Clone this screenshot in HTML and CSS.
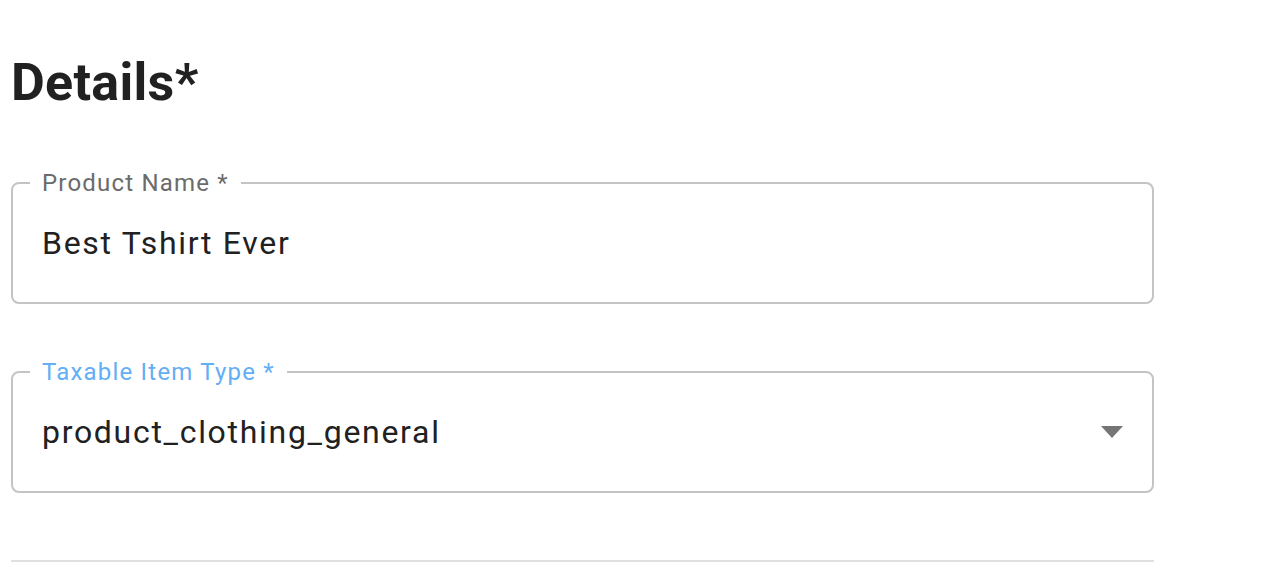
FILE: index.html
```html
<!DOCTYPE html>
<html lang="en">
<head>
  <meta charset="UTF-8">
  <title>Details</title>
  <link rel="stylesheet" href="styles.css">
</head>
<body>
  <div class="page">
    <!-- Heading -->
    <h1 class="title">Details*</h1>

    <!-- Product name -->
    <div class="field">
      <span class="field-label">Product Name *</span>
      <div class="field-value">Best Tshirt Ever</div>
    </div>

    <!-- Taxable item type (select) -->
    <div class="field field-select">
      <span class="field-label focused">Taxable Item Type *</span>
      <div class="field-value">product_clothing_general</div>
      <svg class="arrow" width="22" height="12" viewBox="0 0 22 12">
        <path d="M0 0 L22 0 L11 12 Z" fill="#757575"/>
      </svg>
    </div>

    <hr class="divider">
  </div>
</body>
</html>
```

FILE: styles.css
```css
body {
  margin: 0;
  background: #fff;
  font-family: Roboto, "Liberation Sans", Arial, sans-serif;
  color: #212121;
}

.page {
  width: 1143px;
  padding: 57px 0 0 11px;
}

.title {
  font-size: 52px;
  line-height: 52px;
  font-weight: 700;
  margin: 0 0 73px 0;
  letter-spacing: 0.3px;
}

.field {
  position: relative;
  display: flex;
  align-items: center;
  height: 118px;
  border: 2px solid #c4c4c4;
  border-radius: 8px;
  padding: 0 29px;
  margin-bottom: 67px;
}

.field-label {
  position: absolute;
  top: -13px;
  left: 17px;
  padding: 0 12px 0 12px;
  background: #fff;
  font-size: 24px;
  line-height: 24px;
  letter-spacing: 1.2px;
  color: #6b6b6b;
}

.field-label.focused {
  color: #63aef5;
}

.field-value {
  flex: 1;
  font-size: 32px;
  line-height: 38px;
  letter-spacing: 1.7px;
}

.field-select {
  padding-right: 29px;
}

.arrow {
  display: block;
  flex-shrink: 0;
}

.divider {
  border: none;
  height: 2px;
  background: #e0e0e0;
  margin: 0;
}
```
